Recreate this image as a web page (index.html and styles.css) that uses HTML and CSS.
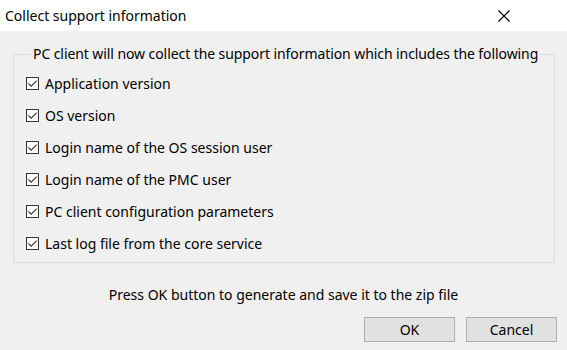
FILE: index.html
```html
<!DOCTYPE html>
<html>
<head>
<meta charset="utf-8">
<link rel="stylesheet" href="styles.css">
</head>
<body>
<div class="window">
  <div class="titlebar">
    <span class="title">Collect support information</span>
    <span class="close"><svg width="12" height="12" viewBox="0 0 12 12"><path d="M0.5 0.5 L11.5 11.5 M11.5 0.5 L0.5 11.5" stroke="#000" stroke-width="1.1" fill="none"/></svg></span>
  </div>
  <div class="content">
    <fieldset class="group">
      <legend class="legend">PC client will now collect the support information which includes the following</legend>
      <div class="row"><span class="check"><svg width="11" height="11" viewBox="0 0 11 11"><path d="M1.3 5.3 L4.2 8.2 L9.7 2.7" stroke="#333" stroke-width="1.1" fill="none"/></svg></span><span>Application version</span></div>
      <div class="row"><span class="check"><svg width="11" height="11" viewBox="0 0 11 11"><path d="M1.3 5.3 L4.2 8.2 L9.7 2.7" stroke="#333" stroke-width="1.1" fill="none"/></svg></span><span>OS version</span></div>
      <div class="row"><span class="check"><svg width="11" height="11" viewBox="0 0 11 11"><path d="M1.3 5.3 L4.2 8.2 L9.7 2.7" stroke="#333" stroke-width="1.1" fill="none"/></svg></span><span>Login name of the OS session user</span></div>
      <div class="row"><span class="check"><svg width="11" height="11" viewBox="0 0 11 11"><path d="M1.3 5.3 L4.2 8.2 L9.7 2.7" stroke="#333" stroke-width="1.1" fill="none"/></svg></span><span>Login name of the PMC user</span></div>
      <div class="row"><span class="check"><svg width="11" height="11" viewBox="0 0 11 11"><path d="M1.3 5.3 L4.2 8.2 L9.7 2.7" stroke="#333" stroke-width="1.1" fill="none"/></svg></span><span>PC client configuration parameters</span></div>
      <div class="row"><span class="check"><svg width="11" height="11" viewBox="0 0 11 11"><path d="M1.3 5.3 L4.2 8.2 L9.7 2.7" stroke="#333" stroke-width="1.1" fill="none"/></svg></span><span>Last log file from the core service</span></div>
    </fieldset>
    <div class="note">Press OK button to generate and save it to the zip file</div>
    <div class="buttons">
      <button class="btn">OK</button>
      <button class="btn">Cancel</button>
    </div>
  </div>
</div>
</body>
</html>
```

FILE: styles.css
```css
html, body {
  margin: 0;
  padding: 0;
}
body {
  width: 567px;
  height: 350px;
  overflow: hidden;
  font-family: "Noto Sans", "Open Sans", sans-serif;
  font-size: 14px;
  color: #000;
}
.window {
  display: flex;
  flex-direction: column;
  height: 350px;
}
.titlebar {
  height: 31px;
  background: #fff;
  display: flex;
  align-items: center;
  justify-content: space-between;
  padding-left: 5px;
  box-sizing: border-box;
}
.title {
  font-size: 14px;
}
.close {
  width: 12px;
  height: 12px;
  margin-right: 57px;
  display: flex;
}
.content {
  flex: 1;
  background: #f0f0f0;
  display: flex;
  flex-direction: column;
}
.group {
  margin: 13px 12px 0 13px;
  border: 1px solid #dcdcdc;
  padding: 3px 0 3px 12px;
  min-width: 0;
}
.legend {
  padding: 0 2px;
  margin-left: 5px;
  line-height: 20px;
  letter-spacing: -0.08px;
}
.row {
  height: 32px;
  display: flex;
  align-items: center;
  gap: 6px;
}
.check {
  width: 13px;
  height: 13px;
  box-sizing: border-box;
  border: 1px solid #333;
  background: #fff;
  display: flex;
  align-items: center;
  justify-content: center;
}
.note {
  text-align: center;
  margin-top: 22px;
  line-height: 20px;
}
.buttons {
  display: flex;
  justify-content: flex-end;
  gap: 11px;
  margin-top: 12px;
  padding-right: 10px;
}
.btn {
  width: 91px;
  height: 25px;
  background: #e1e1e1;
  border: 1px solid #adadad;
  font-family: inherit;
  font-size: 14px;
  padding: 0;
  color: #000;
}
```
